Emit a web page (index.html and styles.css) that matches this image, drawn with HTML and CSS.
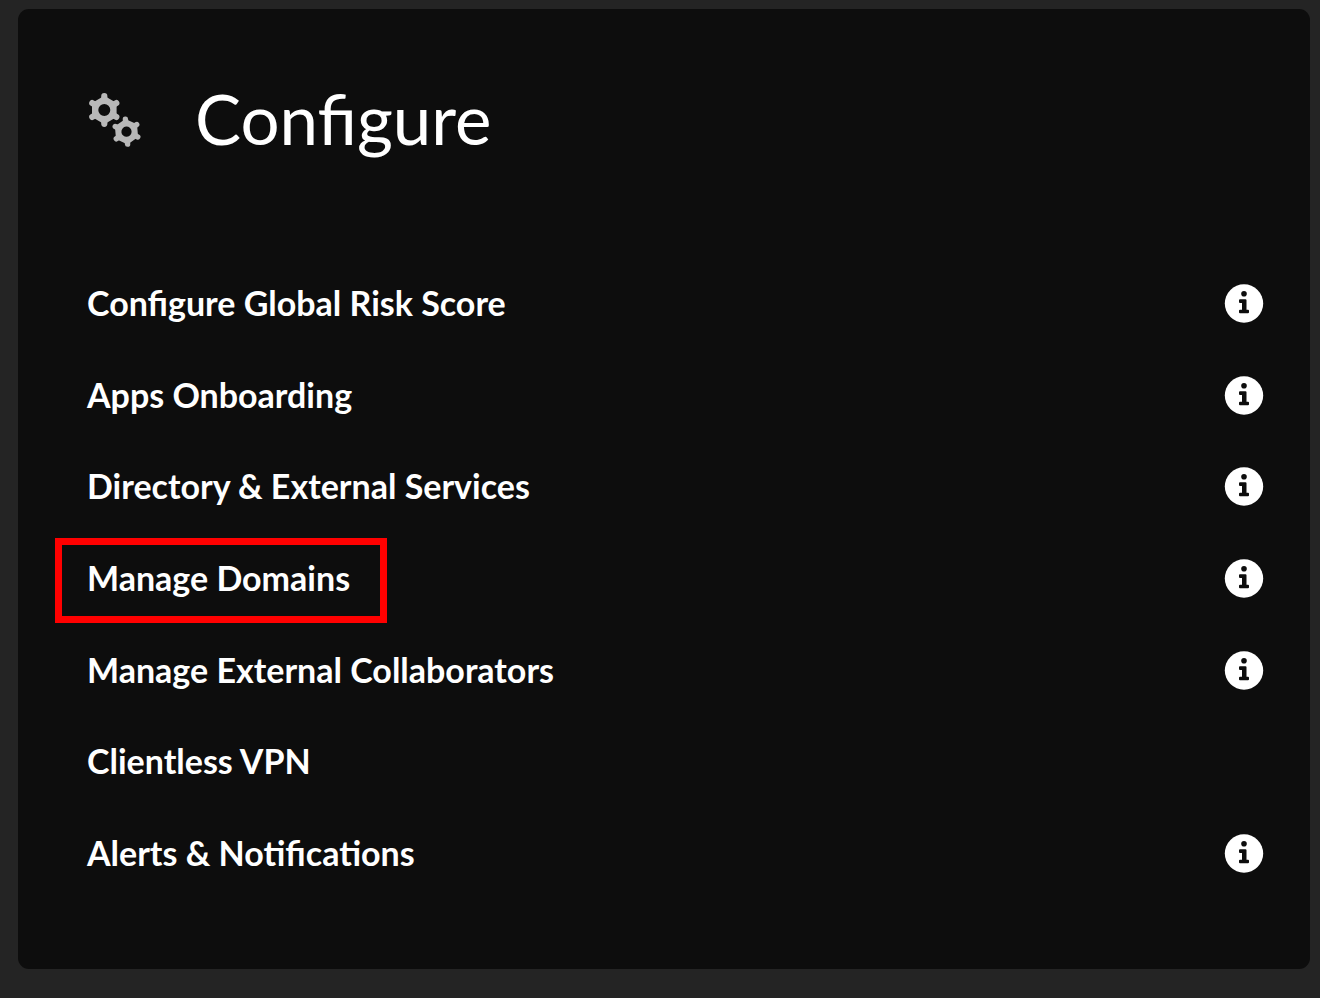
FILE: index.html
```html
<!DOCTYPE html>
<html lang="en">
<head>
  <meta charset="UTF-8" />
  <meta name="viewport" content="width=device-width, initial-scale=1.0" />
  <title>Configure</title>
  <link rel="stylesheet" href="styles.css">
</head>
<body>

  <!-- shared icon shapes -->
  <svg class="sprite" aria-hidden="true">
    <symbol id="icon-info" viewBox="0 0 40 40">
      <circle cx="20" cy="20.5" r="19.2" fill="#fff" />
      <circle cx="20" cy="10.7" r="2.8" fill="#0d0d0d" />
      <path fill="#0d0d0d" d="M16 16.3h5.5q1 0 1 1v9.4h1.5q1 0 1 1v1.6q0 1-1 1h-8q-1 0-1-1v-1.6q0-1 1-1h2v-6.8h-2q-1 0-1-1v-1.6q0-1 1-1z" />
    </symbol>
  </svg>

  <main class="card">
    <header class="card-header">
      <svg class="gears" viewBox="0 0 56 56" aria-hidden="true">
        <g transform="translate(17.3 18)">
          <path class="gear-body" d="M0-14.2L12.3-7.1V7.1L0 14.2L-12.3 7.1V-7.1ZM6 0A6 6 0 1 0-6 0A6 6 0 1 0 6 0Z" />
          <path stroke-width="6.2" d="M0-11V-13.8M0 11V13.8M9.5-5.5l2.5-1.4M9.5 5.5l2.5 1.4M-9.5-5.5l-2.5-1.4M-9.5 5.5l-2.5 1.4" />
        </g>
        <g transform="translate(39.5 39.7) rotate(-5)">
          <path class="gear-body" d="M0-12.8L11.1-6.4V6.4L0 12.8L-11.1 6.4V-6.4ZM5.1 0A5.1 5.1 0 1 0-5.1 0A5.1 5.1 0 1 0 5.1 0Z" />
          <path stroke-width="5.4" d="M0-10V-12.5M0 10V12.5M8.7-5l2.1-1.2M8.7 5l2.1 1.2M-8.7-5l-2.1-1.2M-8.7 5l-2.1 1.2" />
        </g>
      </svg>
      <h1>Configure</h1>
    </header>

    <ul class="menu">
      <li>
        <a href="#">Configure Global Risk Score</a>
        <button type="button" class="info" aria-label="About Configure Global Risk Score"><svg><use href="#icon-info" /></svg></button>
      </li>
      <li>
        <a href="#">Apps Onboarding</a>
        <button type="button" class="info" aria-label="About Apps Onboarding"><svg><use href="#icon-info" /></svg></button>
      </li>
      <li>
        <a href="#">Directory &amp; External Services</a>
        <button type="button" class="info" aria-label="About Directory &amp; External Services"><svg><use href="#icon-info" /></svg></button>
      </li>
      <li>
        <a href="#" class="highlight">Manage Domains</a>
        <button type="button" class="info" aria-label="About Manage Domains"><svg><use href="#icon-info" /></svg></button>
      </li>
      <li>
        <a href="#">Manage External Collaborators</a>
        <button type="button" class="info" aria-label="About Manage External Collaborators"><svg><use href="#icon-info" /></svg></button>
      </li>
      <li>
        <a href="#">Clientless VPN</a>
      </li>
      <li>
        <a href="#">Alerts &amp; Notifications</a>
        <button type="button" class="info" aria-label="About Alerts &amp; Notifications"><svg><use href="#icon-info" /></svg></button>
      </li>
    </ul>
  </main>

</body>
</html>
```
FILE: styles.css
```css
* {
  box-sizing: border-box;
}
body {
  margin: 0;
  min-height: 100vh;
  padding: 9px 10px 29px 18px;
  display: flex;
  background: #242424;
  color: #fff;
  font-family: Lato, "Liberation Sans", sans-serif;
}
.sprite {
  position: absolute;
  width: 0;
  height: 0;
}
.card {
  flex: 1;
  display: flex;
  flex-direction: column;
  padding: 66px 46px 94px 69px;
  background: #0d0d0d;
  border-radius: 11px;
}
.card-header {
  display: flex;
  align-items: center;
  gap: 52px;
  margin-bottom: 116px;
}
.card-header h1 {
  margin: 0;
  padding-bottom: 2px;
  font-size: 69px;
  font-weight: 400;
  line-height: 88px;
}
.gears {
  width: 56px;
  height: 56px;
  fill: none;
  stroke: #b8b8b8;
  stroke-linecap: round;
}
.gear-body {
  fill: #b8b8b8;
  fill-rule: evenodd;
  stroke: none;
}
.menu {
  flex: 1;
  display: flex;
  flex-direction: column;
  justify-content: space-between;
  margin: 0;
  padding: 0;
  list-style: none;
}
.menu li {
  display: flex;
  align-items: center;
  justify-content: space-between;
  min-height: 44px;
}
.menu a {
  position: relative;
  color: #fff;
  font-size: 34px;
  font-weight: 700;
  line-height: 44px;
  text-decoration: none;
}
.menu a:hover {
  text-decoration: underline;
}
.menu .highlight::after {
  content: "";
  position: absolute;
  inset: -18px -37px -23px -32px;
  border: 7px solid #ff0000;
}
.info {
  padding: 0;
  border: none;
  background: none;
  cursor: pointer;
}
.info svg {
  display: block;
  width: 40px;
  height: 40px;
}
```
